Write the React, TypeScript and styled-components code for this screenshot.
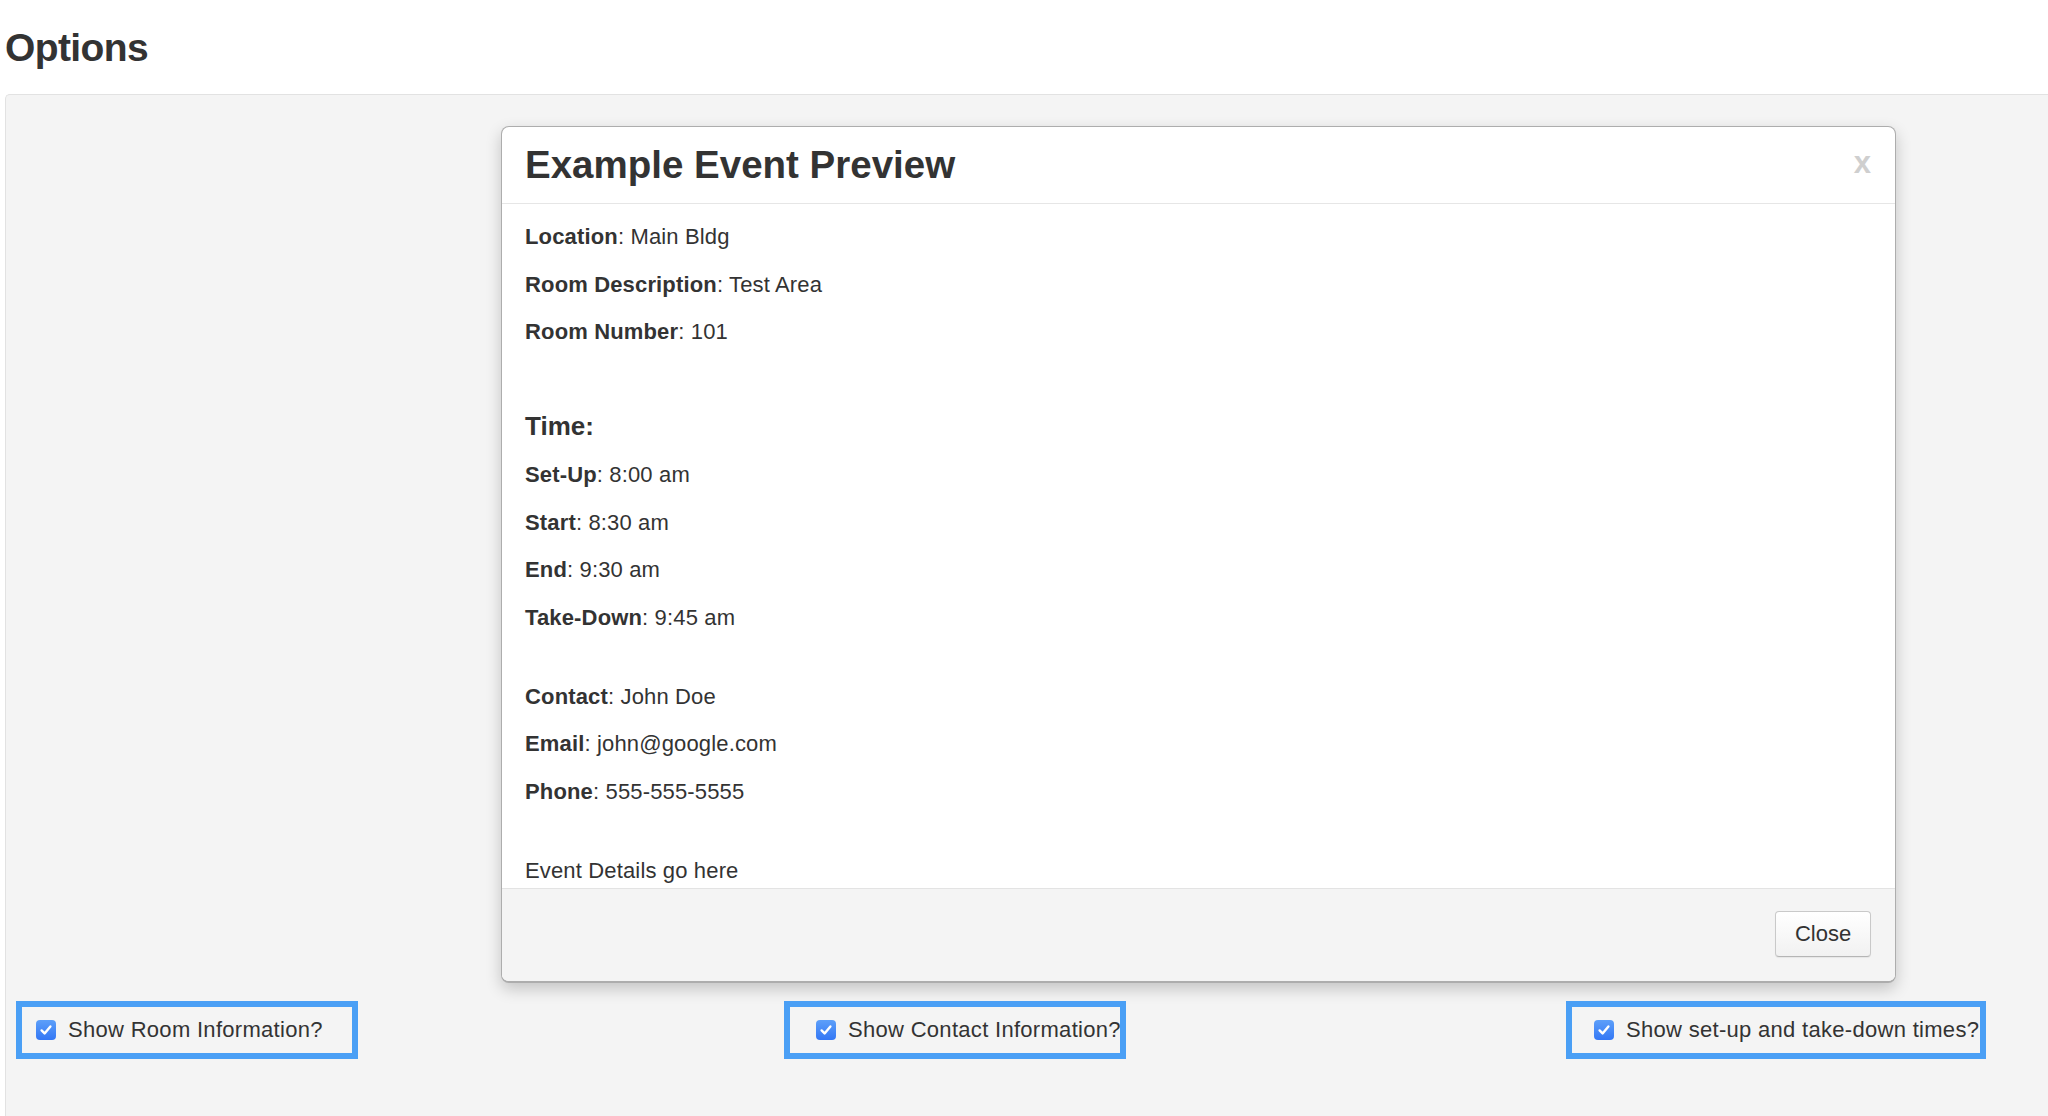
import styled, { createGlobalStyle } from "styled-components";

interface BoxProps {
  width: number;
  inset: number;
  offset: number;
}

const Global = createGlobalStyle`
  html, body {
    margin: 0;
    background: #fff;
    overflow: hidden;
  }
  body {
    font-family: "Liberation Sans", Arial, Helvetica, sans-serif;
    color: #333;
  }
`;

const fields = [
  [
    ["Location", "Main Bldg"],
    ["Room Description", "Test Area"],
    ["Room Number", "101"],
  ],
  [
    ["Set-Up", "8:00 am"],
    ["Start", "8:30 am"],
    ["End", "9:30 am"],
    ["Take-Down", "9:45 am"],
  ],
  [
    ["Contact", "John Doe"],
    ["Email", "john@google.com"],
    ["Phone", "555-555-5555"],
  ],
];

const Check = () => (
  <CheckBox>
    <svg width="14" height="14" viewBox="0 0 14 14">
      <path
        d="M2.6 7.4 L5.6 10.4 L11.4 3.4"
        fill="none"
        stroke="#fff"
        strokeWidth="2.4"
        strokeLinecap="round"
        strokeLinejoin="round"
      />
    </svg>
  </CheckBox>
);

const App = () => {
  return (
    <Page>
      <Global />
      <Title>Options</Title>
      <Well>
        <Modal>
          <Header>
            <ModalTitle>Example Event Preview</ModalTitle>
            <CloseX>x</CloseX>
          </Header>
          <Body>
            {fields[0].map(([k, v]) => (
              <Field key={k}>
                <b>{k}</b>: {v}
              </Field>
            ))}
            <TimeHeading>Time:</TimeHeading>
            {fields[1].map(([k, v]) => (
              <Field key={k}>
                <b>{k}</b>: {v}
              </Field>
            ))}
            <Group>
              {fields[2].map(([k, v]) => (
                <Field key={k}>
                  <b>{k}</b>: {v}
                </Field>
              ))}
            </Group>
            <Group>
              <Field last>Event Details go here</Field>
            </Group>
          </Body>
          <Footer>
            <Button>Close</Button>
          </Footer>
        </Modal>
        <Options>
          <OptionBox width={342} inset={14} offset={0}>
            <Check />
            Show Room Information?
          </OptionBox>
          <OptionBox width={342} inset={26} offset={426}>
            <Check />
            Show Contact Information?
          </OptionBox>
          <OptionBox width={420} inset={22} offset={440}>
            <Check />
            Show set-up and take-down times?
          </OptionBox>
        </Options>
      </Well>
    </Page>
  );
};

const Page = styled.div`
  padding-left: 5px;
  height: 1116px;
  display: flex;
  flex-direction: column;
`;

const Title = styled.h1`
  margin: 26px 0 25px;
  font-size: 39px;
  line-height: 43px;
  font-weight: 700;
  letter-spacing: -0.6px;
  color: #333;
`;

const Well = styled.div`
  flex: 1;
  background: #f4f4f4;
  border-top: 1px solid #e2e2e2;
  border-left: 1px solid #e2e2e2;
  border-top-left-radius: 5px;
  padding: 31px 0 0 0;
`;

const Modal = styled.div`
  margin-left: 495px;
  width: 1395px;
  box-sizing: border-box;
  background: #fff;
  border: 1px solid rgba(0, 0, 0, 0.32);
  border-bottom-width: 2px;
  border-radius: 8px;
  box-shadow: 0 6px 16px rgba(0, 0, 0, 0.2);
  overflow: hidden;
`;

const Header = styled.div`
  height: 76px;
  padding: 0 24px 0 23px;
  display: flex;
  align-items: center;
  justify-content: space-between;
  border-bottom: 1px solid #e6e6e6;
`;

const ModalTitle = styled.h2`
  margin: 0;
  font-size: 38.5px;
  font-weight: 700;
  letter-spacing: 0;
  color: #333;
`;

const CloseX = styled.span`
  font-size: 31px;
  font-weight: 700;
  color: #cfcfcf;
  line-height: 1;
  margin-top: -6px;
`;

const Body = styled.div`
  padding: 17px 23px 1px;
  font-size: 22px;
`;

const Field = styled.p<{ last?: boolean }>`
  margin: 0 0 ${({ last }) => (last ? 0 : 15.5)}px;
  line-height: 32px;
  font-size: 22px;
  letter-spacing: 0.15px;
  color: #333;

  b {
    font-weight: 700;
  }
`;

const TimeHeading = styled.h4`
  margin: 65px 0 19px;
  font-size: 26px;
  line-height: 27px;
  font-weight: 700;
  color: #333;
`;

const Group = styled.div`
  margin-top: 47px;
`;

const Footer = styled.div`
  background: #f4f4f4;
  border-top: 1px solid #e3e3e3;
  padding: 22px 24px 24px;
  display: flex;
  justify-content: flex-end;
`;

const Button = styled.button`
  width: 96px;
  height: 46px;
  font-family: inherit;
  font-size: 22px;
  color: #333;
  background: linear-gradient(#ffffff, #f1f1f1);
  border: 1px solid #c9c9c9;
  border-bottom-color: #b5b5b5;
  border-radius: 4px;
  box-shadow: 0 1px 1px rgba(0, 0, 0, 0.06);
`;

const Options = styled.div`
  display: flex;
  padding: 18px 0 0 10px;
`;

const OptionBox = styled.label<BoxProps>`
  width: ${({ width }) => width}px;
  margin-left: ${({ offset }) => offset}px;
  height: 58px;
  box-sizing: border-box;
  border: 6px solid #4a9ff5;
  display: flex;
  align-items: center;
  gap: 12px;
  padding-left: ${({ inset }) => inset}px;
  font-size: 22px;
  letter-spacing: 0.3px;
  color: #333;
  white-space: nowrap;
  flex-shrink: 0;
`;

const CheckBox = styled.span`
  width: 20px;
  height: 20px;
  border-radius: 4px;
  background: linear-gradient(#5d9ff9, #3377f5);
  display: inline-flex;
  align-items: center;
  justify-content: center;
  flex-shrink: 0;
`;

export default App;
